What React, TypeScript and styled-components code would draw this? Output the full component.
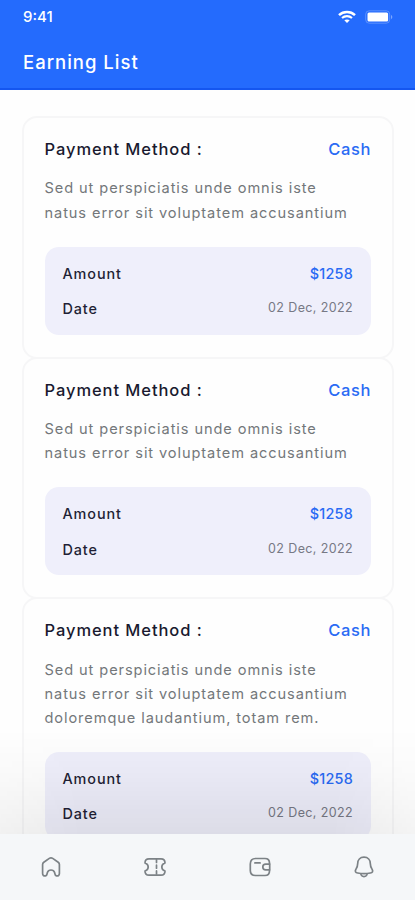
import React from 'react';
import styled, { createGlobalStyle } from 'styled-components';

const Global = createGlobalStyle`
  * { box-sizing: border-box; }
  html, body { margin: 0; padding: 0; overflow: hidden; background: #fff; }
  body { font-family: Inter, "Liberation Sans", sans-serif; }
`;

const Screen = styled.div`
  display: flex;
  flex-direction: column;
  width: 415px;
  height: 900px;
  overflow: hidden;
  background: #fefefe;
`;

const Header = styled.header`
  flex: none;
  height: 90px;
  padding: 0 23px;
  background: #246bfd;
  border-bottom: 2px solid #1456f0;
  color: #fff;
`;

const StatusBar = styled.div`
  display: flex;
  justify-content: space-between;
  align-items: center;
  height: 34px;
`;

const Time = styled.span`
  font-size: 15px;
  font-weight: 500;
  line-height: 34px;
`;

const StatusIcons = styled.div`
  display: flex;
  align-items: center;
  gap: 9px;
  margin-right: -1px;
`;

const Title = styled.h1`
  margin: 12px 0 0;
  font-size: 18.5px;
  font-weight: 500;
  line-height: 32px;
  letter-spacing: 1px;
`;

const List = styled.main`
  flex: 1;
  min-height: 0;
  overflow: hidden;
  padding: 25.9px 21.5px 0 22px;
  position: relative;
`;

const Fade = styled.div`
  position: absolute;
  left: 0;
  right: 0;
  bottom: 0;
  height: 105px;
  background: linear-gradient(to bottom, rgba(0, 0, 0, 0), rgba(0, 0, 0, 0.025) 40%, rgba(0, 0, 0, 0.08));
  mask-image: linear-gradient(to right, rgba(0, 0, 0, 0.65), #000 20%, #000 80%, rgba(0, 0, 0, 0.5));
`;

const Card = styled.article`
  border: 2px solid #f6f6f7;
  border-radius: 15px;
  padding: 17.2px 20.5px 22px;

  & + & {
    margin-top: -2px;
  }
`;

const CardHead = styled.div`
  display: flex;
  justify-content: space-between;
  line-height: 28px;
  font-size: 16.5px;
  font-weight: 500;
`;

const Method = styled.span`
  color: #19192f;
  letter-spacing: 0.93px;
`;

const MethodValue = styled.span`
  color: #2a6bf4;
  letter-spacing: 0.6px;
`;

const Description = styled.p`
  margin: 13.2px 0 21.7px;
  color: #73777a;
  font-size: 14.6px;
  line-height: 24.3px;
  letter-spacing: 0.91px;
  white-space: nowrap;
`;

const Details = styled.div`
  height: 88px;
  padding: 9px 18px;
  border-radius: 14px;
  background: #efeffb;
`;

const DetailRow = styled.div`
  display: flex;
  justify-content: space-between;
  height: 35.3px;
  line-height: 35.3px;
`;

const Label = styled.span`
  color: #1f1f35;
  font-size: 14.4px;
  font-weight: 500;
  letter-spacing: 0.9px;
`;

const Amount = styled.span`
  color: #2a6bf4;
  font-size: 14.4px;
  font-weight: 500;
  letter-spacing: 0.25px;
`;

const DateValue = styled.span`
  color: #777985;
  font-size: 12.5px;
  line-height: 33px;
  letter-spacing: 0.38px;
`;

const NavBar = styled.nav`
  flex: none;
  display: grid;
  grid-template-columns: repeat(4, 104.3px);
  justify-content: center;
  height: 66px;
  background: #f5f7f9;
`;

const NavItem = styled.a`
  display: flex;
  align-items: center;
  justify-content: center;
  color: #7c8286;
`;

const Glyph = styled.svg`
  width: 24px;
  height: 24px;
  fill: none;
  stroke: currentColor;
  stroke-width: 1.7;
  stroke-linecap: round;
  stroke-linejoin: round;
`;

const WifiIcon = () => (
  <svg width="18" height="14" viewBox="0 0 18 14" fill="none" stroke="#fff">
    <path d="M1 5.1C5.5.9 12.5.9 17 5.1" strokeWidth="2.5" />
    <path d="M4 8c2.8-2.5 7.2-2.5 10 0" strokeWidth="2.1" />
    <path d="M6.3 10.3c1.5-1.2 3.9-1.2 5.4 0L9 13z" fill="#fff" stroke="none" />
  </svg>
);

const BatteryIcon = () => (
  <svg width="28" height="14" viewBox="0 0 28 14">
    <rect x=".7" y=".8" width="24" height="12.4" rx="3.5" fill="none" stroke="#fff" strokeOpacity=".25" />
    <rect x="2.5" y="2.4" width="20.6" height="9.2" rx="1.5" fill="#fff" />
    <path d="M26 5v4.2c1.8-.7 1.8-3.5 0-4.2z" fill="#fff" fillOpacity=".4" />
  </svg>
);

const HomeIcon = () => (
  <Glyph viewBox="0 0 24 24">
    <path d="M3.6 9.6v8.900c0 1.800 1.300 2.700 2.900 2.300 1.800-.4 1.500-2 1.900-3.300.5-1.600 1.800-2.500 3.600-2.500s3.100.9 3.600 2.500c.4 1.300.1 2.900 1.900 3.300 1.600.4 2.900-.5 2.900-2.300V9.600c0-1-.4-1.700-1.200-2.300l-5.500-3.900c-1.100-.8-2.300-.8-3.400 0L4.800 7.300c-.8.6-1.200 1.300-1.200 2.300z" />
  </Glyph>
);

const TicketIcon = () => (
  <Glyph viewBox="0 0 24 24">
    <path d="M6 3.800h12c2.700 0 4 1.400 4 4.200-2.600.9-3.200 2-3.200 4s.6 3.100 3.200 4c0 2.800-1.300 4.200-4 4.200H6c-2.700 0-4-1.400-4-4.200 2.600-.9 3.200-2 3.200-4S4.600 8.900 2 8c0-2.800 1.300-4.200 4-4.200z" />
    <path d="M13.500 4.500v15" strokeDasharray="3 2.700" />
  </Glyph>
);

const WalletIcon = () => (
  <Glyph viewBox="0 0 24 24">
    <path d="M21.500 9V8c0-3-1.700-4.500-4.500-4.500H7.500C4.200 3.500 2.300 5.400 2.300 9v6.500c0 3.300 1.900 5 5.200 5H17c2.800 0 4.500-1.500 4.500-4.500v-1" />
    <path d="M21.700 9.200v5.600h-4c-1.700 0-2.900-1.200-2.900-2.800s1.200-2.800 2.900-2.800z" />
    <path d="M6.900 7.900h5.200" />
  </Glyph>
);

const BellIcon = () => (
  <Glyph viewBox="0 0 24 24">
    <path d="M12 2.200c-4 0-6.300 2.700-6.300 6.400 0 3-.8 4.100-1.900 5.900-1.100 1.900-.2 3.100 1.800 3.500 4.200.9 8.600.9 12.800 0 2-.4 2.900-1.600 1.800-3.500-1.100-1.800-1.900-2.900-1.900-5.900 0-3.700-2.300-6.400-6.300-6.400z" />
    <path d="M9 19.600c.6 1.300 1.600 2 3 2s2.400-.7 3-2" />
  </Glyph>
);

const intro = ['Sed ut perspiciatis unde omnis iste', 'natus error sit voluptatem accusantium'];
const earnings = [
  { id: 1, lines: intro },
  { id: 2, lines: intro },
  { id: 3, lines: [...intro, 'doloremque laudantium, totam rem.'] },
];

export default function App() {
  return (
    <>
      <Global />
      <Screen>
        <Header>
          <StatusBar>
            <Time>9:41</Time>
            <StatusIcons>
              <WifiIcon />
              <BatteryIcon />
            </StatusIcons>
          </StatusBar>
          <Title>Earning List</Title>
        </Header>
        <List>
          {earnings.map(({ id, lines }) => (
            <Card key={id}>
              <CardHead>
                <Method>Payment Method :</Method>
                <MethodValue>Cash</MethodValue>
              </CardHead>
              <Description>
                {lines.map((line, i) => (
                  <React.Fragment key={line}>
                    {i > 0 && <br />}
                    {line}
                  </React.Fragment>
                ))}
              </Description>
              <Details>
                <DetailRow>
                  <Label>Amount</Label>
                  <Amount>$1258</Amount>
                </DetailRow>
                <DetailRow>
                  <Label>Date</Label>
                  <DateValue>02 Dec, 2022</DateValue>
                </DetailRow>
              </Details>
            </Card>
          ))}
          <Fade />
        </List>
        <NavBar>
          <NavItem><HomeIcon /></NavItem>
          <NavItem><TicketIcon /></NavItem>
          <NavItem><WalletIcon /></NavItem>
          <NavItem><BellIcon /></NavItem>
        </NavBar>
      </Screen>
    </>
  );
}
